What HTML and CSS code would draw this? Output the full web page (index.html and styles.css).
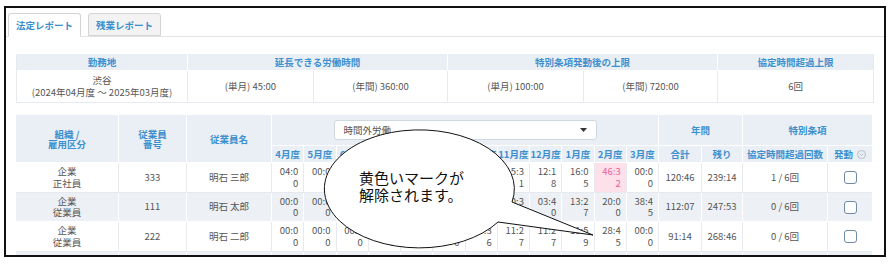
FILE: index.html
```html
<!DOCTYPE html>
<html lang="ja">
<head>
    <meta charset="UTF-8">
    <title>法定レポート</title>
    <link rel="stylesheet" href="styles.css">
</head>
<body>
<div class="frame">
    <div class="tabs">
        <div class="tab active">法定レポート</div>
        <div class="tab">残業レポート</div>
    </div>

    <div class="panel">
        <table class="limits">
            <colgroup>
                <col style="width:171px"><col style="width:126px"><col style="width:134px">
                <col style="width:136px"><col style="width:134px"><col style="width:155px">
            </colgroup>
            <tr class="hdr">
                <th>勤務地</th>
                <th colspan="2">延長できる労働時間</th>
                <th colspan="2">特別条項発動後の上限</th>
                <th>協定時間超過上限</th>
            </tr>
            <tr class="row">
                <td>渋谷<br>(2024年04月度 ～ 2025年03月度)</td>
                <td>(単月) 45:00</td>
                <td>(年間) 360:00</td>
                <td>(単月) 100:00</td>
                <td>(年間) 720:00</td>
                <td>6回</td>
            </tr>
        </table>

        <table class="report">
            <colgroup>
                <col style="width:103px"><col style="width:68px"><col style="width:85px">
                <col class="mcol"><col class="mcol"><col class="mcol"><col class="mcol">
                <col class="mcol"><col class="mcol"><col class="mcol"><col class="mcol">
                <col class="mcol"><col class="mcol"><col class="mcol"><col class="mcol">
                <col style="width:43px"><col style="width:41px"><col style="width:85px"><col style="width:44px">
            </colgroup>
            <tr class="hdr1">
                <th rowspan="2">組織 /<br>雇用区分</th>
                <th rowspan="2">従業員<br>番号</th>
                <th rowspan="2">従業員名</th>
                <th colspan="12">
                    <div class="sel">
                        <span>時間外労働</span>
                        <svg width="7" height="4" viewBox="0 0 7 4"><path d="M0 0 H7 L3.5 4 Z" fill="#333"/></svg>
                    </div>
                </th>
                <th colspan="2">年間</th>
                <th colspan="2">特別条項</th>
            </tr>
            <tr class="hdr2">
                <th>4月度</th><th>5月度</th><th>6月度</th><th>7月度</th><th>8月度</th><th>9月度</th>
                <th>10月度</th><th>11月度</th><th>12月度</th><th>1月度</th><th>2月度</th><th>3月度</th>
                <th>合計</th><th>残り</th><th>協定時間超過回数</th>
                <th class="fire">発動
                    <svg width="9" height="9" viewBox="0 0 9 9"><circle cx="4.5" cy="4.5" r="4" fill="none" stroke="#a9b4bf" stroke-width="0.8"/><path d="M2.7 3.8 L4.5 5.5 L6.3 3.8" fill="none" stroke="#a9b4bf" stroke-width="0.8"/></svg>
                </th>
            </tr>
            <tr class="r1">
                <td>企業<br>正社員</td><td>333</td><td>明石 三郎</td>
                <td class="m">04:00</td><td class="m">00:00</td><td class="m">08:12</td><td class="m">10:25</td>
                <td class="m">06:40</td><td class="m">09:50</td><td class="m">02:15</td><td class="m">15:31</td>
                <td class="m">12:18</td><td class="m">16:05</td><td class="m over">46:32</td><td class="m">00:00</td>
                <td>120:46</td><td>239:14</td><td>1 / 6回</td><td><span class="check"></span></td>
            </tr>
            <tr class="r2 grey">
                <td>企業<br>従業員</td><td>111</td><td>明石 太郎</td>
                <td class="m">00:00</td><td class="m">00:00</td><td class="m">07:30</td><td class="m">05:10</td>
                <td class="m">04:20</td><td class="m">06:15</td><td class="m">03:05</td><td class="m">10:30</td>
                <td class="m">03:40</td><td class="m">13:27</td><td class="m">20:00</td><td class="m">38:45</td>
                <td>112:07</td><td>247:53</td><td>0 / 6回</td><td><span class="check"></span></td>
            </tr>
            <tr class="r3">
                <td>企業<br>従業員</td><td>222</td><td>明石 二郎</td>
                <td class="m">00:00</td><td class="m">00:00</td><td class="m">00:00</td><td class="m">04:50</td>
                <td class="m">06:22</td><td class="m">03:10</td><td class="m">05:36</td><td class="m">11:27</td>
                <td class="m">11:27</td><td class="m">11:59</td><td class="m">28:45</td><td class="m">00:00</td>
                <td>91:14</td><td>268:46</td><td>0 / 6回</td><td><span class="check"></span></td>
            </tr>
            <!-- next row starts below the fold -->
            <tr class="r3 grey">
                <td></td><td></td><td></td>
                <td></td><td></td><td></td><td></td><td></td><td></td>
                <td></td><td></td><td></td><td></td><td></td><td></td>
                <td></td><td></td><td></td><td></td>
            </tr>
        </table>
    </div>

    <!-- 吹き出し -->
    <svg class="callout" width="300" height="140" viewBox="0 0 300 140">
        <path d="M202 82 A95 59 0 1 0 188 102 L283 115 Z" fill="#fff" stroke="#111" stroke-width="1"/>
        <text x="49" y="64">黄色いマークが</text>
        <text x="49" y="81">解除されます。</text>
    </svg>
</div>
</body>
</html>
```

FILE: styles.css
```css
body {
    margin: 0;
    background: #fff;
    font-family: "Noto Sans CJK JP", "Noto Sans", sans-serif;
}
.frame {
    position: relative;
    box-sizing: border-box;
    width: 882px;
    height: 251px;
    margin: 6px 0 0 4px;
    border: 2px solid #111;
    overflow: hidden;
}
.tabs {
    display: flex;
    gap: 7px;
    height: 23px;
    padding: 5px 0 0 2px;
    border-bottom: 1px solid #e4e4e4;
}
.tab {
    box-sizing: border-box;
    width: 73px;
    height: 23px;
    display: flex;
    align-items: center;
    justify-content: center;
    border: 1px solid #d4d4d4;
    border-radius: 3px 3px 0 0;
    background: #f3f3f3;
    color: #3a8fd0;
    font-size: 9.5px;
    font-weight: bold;
}
.tab.active {
    height: 24px;
    background: #fff;
    border-bottom-color: #fff;
}
.panel {
    padding: 17px 12px 0 10px;
}
table {
    width: 856px;
    table-layout: fixed;
    border-collapse: separate;
    border-spacing: 0;
    font-size: 9.5px;
    color: #555;
}
th {
    padding: 0;
    background: #e9eff4;
    color: #3d8fcf;
    font-weight: bold;
    text-align: center;
    line-height: 10px;
    border-right: 1px solid #fff;
    border-bottom: 1px solid #fff;
}
td {
    padding: 0 4px;
    text-align: center;
    line-height: 11.5px;
    border-right: 1px solid #e6eaee;
    border-bottom: 1px solid #e6eaee;
}
tr > :last-child {
    border-right: none;
}
.limits {
    border-left: 1px solid #e6eaee;
    border-right: 1px solid #e6eaee;
}
.limits .hdr {
    height: 17px;
}
.limits .row {
    height: 32px;
}
.report {
    margin-top: 12px;
}
.report .mcol {
    width: 32.25px;
}
.hdr1 {
    height: 31px;
}
.hdr2 {
    height: 17px;
}
.r1 {
    height: 30px;
}
.r2 {
    height: 29px;
}
.r3 {
    height: 30px;
}
.grey td {
    background: #edf1f5;
    border-color: #fff;
}
td.m {
    padding: 0 5px 0 6px;
    text-align: right;
    word-break: break-all;
}
td.over {
    background: #fde0e9;
    color: #ee5f97;
}
.sel {
    box-sizing: border-box;
    width: 263px;
    height: 20px;
    margin: 0 auto;
    padding: 0 9px 0 9px;
    display: flex;
    align-items: center;
    justify-content: space-between;
    background: #fff;
    border: 1px solid #cfd8e0;
    border-radius: 3px;
    color: #555;
    font-weight: normal;
}
.fire svg {
    vertical-align: -1px;
    margin-left: 2px;
}
.check {
    display: block;
    box-sizing: border-box;
    width: 13px;
    height: 13px;
    margin: 0 auto;
    background: #fff;
    border: 1px solid #6f8aa6;
    border-radius: 3px;
}
.callout {
    position: absolute;
    left: 304px;
    top: 112px;
}
.callout text {
    font-family: "Noto Sans CJK JP", sans-serif;
    font-size: 15px;
    fill: #111;
}
```
